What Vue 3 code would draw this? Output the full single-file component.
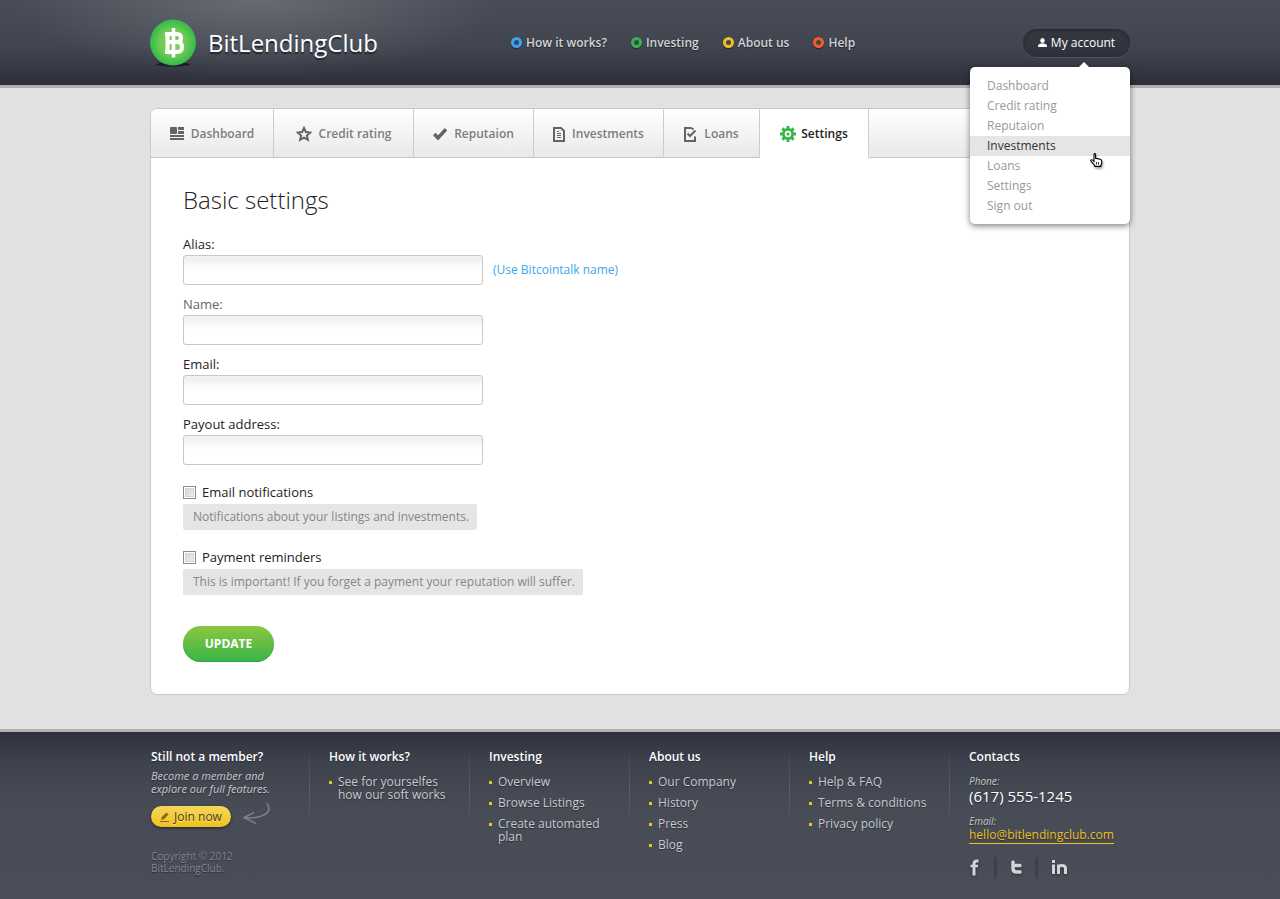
<script setup>
import { reactive, ref } from 'vue'

const nav = [
  { label: 'How it works?', tone: 'blue' },
  { label: 'Investing', tone: 'green' },
  { label: 'About us', tone: 'yellow' },
  { label: 'Help', tone: 'red' },
]

const menu = ['Dashboard', 'Credit rating', 'Reputaion', 'Investments', 'Loans', 'Settings', 'Sign out']
const hovered = ref('Investments')

const tabs = [
  { label: 'Dashboard', icon: 'dashboard' },
  { label: 'Credit rating', icon: 'star' },
  { label: 'Reputaion', icon: 'check' },
  { label: 'Investments', icon: 'document' },
  { label: 'Loans', icon: 'form' },
  { label: 'Settings', icon: 'gear' },
]
const activeTab = ref('Settings')

const form = reactive({ alias: '', name: '', email: '', payout: '', notifications: false, reminders: false })

const fields = [
  { key: 'alias', label: 'Alias:', hint: '(Use Bitcointalk name)' },
  { key: 'name', label: 'Name:', muted: true },
  { key: 'email', label: 'Email:' },
  { key: 'payout', label: 'Payout address:' },
]

const options = [
  { key: 'notifications', label: 'Email notifications', note: 'Notifications about your listings and investments.' },
  { key: 'reminders', label: 'Payment reminders', note: 'This is important! If you forget a payment your reputation will suffer.' },
]

const columns = [
  { title: 'How it works?', links: ['See for yourselfes how our soft works'] },
  { title: 'Investing', links: ['Overview', 'Browse Listings', 'Create automated plan'] },
  { title: 'About us', links: ['Our Company', 'History', 'Press', 'Blog'] },
  { title: 'Help', links: ['Help & FAQ', 'Terms & conditions', 'Privacy policy'] },
]

const teeth = [0, 45, 90, 135, 180, 225, 270, 315]
</script>

<template>
  <div class="page">
    <header class="header">
      <div class="wrap header-row">
        <a href="#" class="logo">
          <svg class="logo-mark" width="46" height="48" viewBox="0 0 46 48" aria-hidden="true">
            <defs>
              <radialGradient id="coin" cx="50%" cy="50%" r="52%">
                <stop offset="0" stop-color="#8fd35a" />
                <stop offset="0.55" stop-color="#6ccb52" />
                <stop offset="1" stop-color="#2fb84b" />
              </radialGradient>
            </defs>
            <ellipse cx="23" cy="45.500" rx="17" ry="2" fill="#1d202a" />
            <circle cx="23" cy="23.500" r="23" fill="url(#coin)" />
            <g fill="none" stroke="#fff" stroke-linejoin="round">
              <path d="M15 15h12q4 0 4 4t-4 4H16M27 23q5 0 5 5t-5 5H15" stroke-width="4" />
              <path d="M17.500 13v22" stroke-width="4" />
              <path d="M23.500 9v29.500" stroke-width="3.500" />
            </g>
          </svg>
          <span>BitLendingClub</span>
        </a>
        <nav class="nav">
          <a v-for="item in nav" :key="item.label" href="#" :class="item.tone">
            <i class="ring"></i>{{ item.label }}
          </a>
        </nav>
        <div class="account">
          <button type="button" class="account-button">
            <svg width="9" height="9" viewBox="0 0 9 9" fill="#fff" aria-hidden="true">
              <ellipse cx="4.500" cy="2.500" rx="2.200" ry="2.500" />
              <path d="M0 9V7.500Q0 6 3 5.500h3Q9 6 9 7.500V9z" />
            </svg>
            My account
          </button>
          <div class="dropdown">
            <a
              v-for="item in menu"
              :key="item"
              href="#"
              :class="{ on: hovered === item }"
              @mouseenter="hovered = item"
            >{{ item }}</a>
            <svg class="pointer" width="13" height="15" viewBox="0 0 13 15" aria-hidden="true">
              <path
                d="M4 1.500Q4 .6 4.800.6T5.600 1.500V5.200L7.500 5.600 9.300 6 11 6.700Q11.900 7.200 11.700 8.500V10.500L10.700 12.500V13.400H4.800V12.400L2.800 10 .7 7.800Q.6 6.700 1.600 6.700T4 8.300z"
                fill="#fff" stroke="#000" stroke-width="1.100"
              />
              <path d="M6.500 9v2.500M8.500 9v2.500" stroke="#000" stroke-width="0.800" />
            </svg>
          </div>
        </div>
      </div>
    </header>

    <main class="wrap main">
      <section class="panel">
        <nav class="tabs">
          <a
            v-for="tab in tabs"
            :key="tab.label"
            href="#"
            :class="{ active: tab.label === activeTab }"
            @click.prevent="activeTab = tab.label"
          >
            <svg v-if="tab.icon === 'dashboard'" width="14" height="14" viewBox="0 0 14 14" fill="currentColor">
              <rect width="7" height="7" rx="1" /><rect x="8" width="6" height="3" /><rect x="8" y="4" width="6" height="3" />
              <rect y="8" width="14" height="2" /><rect y="11" width="14" height="2" />
            </svg>
            <svg v-else-if="tab.icon === 'star'" width="16" height="16" viewBox="0 0 16 16" fill="none" stroke="currentColor" stroke-width="2">
              <path d="M8 2l1.800 4 4.400.5-3.300 3 1 4.300L8 11.600l-3.900 2.200 1-4.300-3.300-3L6.200 6z" />
            </svg>
            <svg v-else-if="tab.icon === 'check'" width="14" height="14" viewBox="0 0 14 14" fill="none" stroke="currentColor" stroke-width="3.500">
              <path d="M1.300 7l3.700 4L13 2.300" />
            </svg>
            <svg v-else-if="tab.icon === 'document'" width="12" height="15" viewBox="0 0 12 15" fill="none" stroke="currentColor">
              <path d="M1 1h7l3 3v10H1z" stroke-width="2" />
              <path d="M4 4.500h2M4 6.500h4M4 8.500h4M4 10.500h4" />
            </svg>
            <svg v-else-if="tab.icon === 'form'" width="13" height="15" viewBox="0 0 13 15" fill="none" stroke="currentColor" stroke-width="2">
              <path d="M7.500 1H1v13h10V9.500M7.500 1l2 1.500" />
              <path d="M3.500 6.500L6 9l5.500-5.500" />
            </svg>
            <svg v-else width="16" height="16" viewBox="0 0 16 16" fill="none" stroke="#39b54a">
              <circle cx="8" cy="8" r="4.600" stroke-width="2.800" />
              <circle cx="8" cy="8" r="1.600" fill="#39b54a" stroke="none" />
              <path v-for="a in teeth" :key="a" d="M8 0v3" stroke-width="3" :transform="`rotate(${a} 8 8)`" />
            </svg>
            {{ tab.label }}
          </a>
          <span class="tabs-rest"></span>
        </nav>

        <form class="settings" @submit.prevent>
          <h1>Basic settings</h1>
          <div v-for="field in fields" :key="field.key" class="field">
            <label :for="field.key" :class="{ muted: field.muted }">{{ field.label }}</label>
            <div class="field-row">
              <input :id="field.key" v-model="form[field.key]" type="text" />
              <a v-if="field.hint" href="#">{{ field.hint }}</a>
            </div>
          </div>
          <div v-for="option in options" :key="option.key" class="option">
            <label><input v-model="form[option.key]" type="checkbox" />{{ option.label }}</label>
            <p>{{ option.note }}</p>
          </div>
          <button type="submit" class="update">UPDATE</button>
        </form>
      </section>
    </main>

    <footer class="footer">
      <div class="wrap footer-grid">
        <section class="join">
          <h2>Still not a member?</h2>
          <p class="pitch">Become a member and explore our full features.</p>
          <div class="join-row">
            <button type="button" class="join-button">
              <svg width="10" height="10" viewBox="0 0 10 10" aria-hidden="true">
                <path d="M1 8l.8-3L6.500.5l2 2L4 7.200z" fill="#8a6a14" />
                <path d="M0 9.500h9" stroke="#8a6a14" />
              </svg>
              Join now
            </button>
            <svg width="28" height="22" viewBox="0 0 28 22" fill="none" stroke="#7c8089" stroke-width="1.500" aria-hidden="true">
              <path d="M25 0q5 8-3 12T2 14.500M12 9.500L2 14.500l12 6" />
            </svg>
          </div>
          <p class="copyright">Copyright © 2012<br />BitLendingClub.</p>
        </section>

        <section v-for="column in columns" :key="column.title">
          <h2>{{ column.title }}</h2>
          <ul>
            <li v-for="link in column.links" :key="link"><a href="#">{{ link }}</a></li>
          </ul>
        </section>

        <section class="contacts">
          <h2>Contacts</h2>
          <p class="caption">Phone:</p>
          <p class="phone">(617) 555-1245</p>
          <p class="caption">Email:</p>
          <a class="mail" href="mailto:hello@bitlendingclub.com">hello@bitlendingclub.com</a>
          <div class="social">
            <a href="#" aria-label="Facebook">
              <svg width="10" height="17" viewBox="0 0 10 17" fill="none" stroke="#d3d4d7">
                <path d="M5 16.500V5Q5 2 7.500 2H9.500" stroke-width="3" />
                <path d="M1.500 7h7.500" stroke-width="2.500" />
              </svg>
            </a>
            <a href="#" aria-label="Twitter">
              <svg width="11" height="14" viewBox="0 0 11 14" fill="none" stroke="#d3d4d7" stroke-width="3.500" stroke-linecap="round">
                <path d="M2 2v6.500q0 3.500 3.500 3.500H9M2 5.500h7" />
              </svg>
            </a>
            <a href="#" aria-label="LinkedIn">
              <svg width="15" height="14" viewBox="0 0 15 14" fill="none" stroke="#d3d4d7" stroke-width="3">
                <path d="M1.500 0v3M1.500 4.500V14M6.500 4.500V14M6.500 8q0-2.500 3.500-2.500T13.500 8.500V14" />
              </svg>
            </a>
          </div>
        </section>
      </div>
    </footer>
  </div>
</template>

<style>
body {
  margin: 0;
}
</style>

<style scoped>
* {
  box-sizing: border-box;
}
.page {
  --weave: rgba(255, 255, 255, 0.2);
  display: flex;
  flex-direction: column;
  min-height: 100vh;
  background:
    linear-gradient(135deg, var(--weave) 12.5%, transparent 12.5% 50%, var(--weave) 50% 62.5%, transparent 62.5%) 0 0 / 4px 4px,
    #e0e0e0;
  font: 12px/18px "Open Sans", "Noto Sans", sans-serif;
  color: #333;
}
a {
  color: inherit;
  text-decoration: none;
}
h1,
h2,
p,
ul {
  margin: 0;
  padding: 0;
}
button {
  border: 0;
  font: inherit;
  cursor: pointer;
}
.wrap {
  width: 100%;
  max-width: 980px;
  margin: 0 auto;
}

.header {
  --weave: rgba(255, 255, 255, 0.045);
  border-bottom: 3px solid #b1afb1;
  background:
    linear-gradient(135deg, var(--weave) 12.5%, transparent 12.5% 50%, var(--weave) 50% 62.5%, transparent 62.5%) 0 0 / 4px 4px,
    radial-gradient(ellipse 240px 80px at 20% 0, rgba(255, 255, 255, 0.17), transparent),
    linear-gradient(#474b55, #3f434d 55%, #2a2d39);
}
.header-row {
  display: flex;
  align-items: center;
  height: 85px;
}
.logo {
  display: flex;
  align-items: center;
  gap: 12px;
  flex: 0 0 361px;
  color: #fff;
  font-size: 24px;
  line-height: 32px;
  text-shadow: 0 2px 1px #22252e;
}
.nav {
  display: flex;
  gap: 24px;
  color: #d2d3d5;
  font-weight: 600;
  text-shadow: 0 1px 1px #22252e;
}
.nav a {
  display: flex;
  align-items: center;
  gap: 4px;
}
.ring {
  width: 11px;
  height: 11px;
  border: 3px solid;
  border-radius: 50%;
  box-shadow: 0 1px 1px #22252e;
}
.blue .ring { border-color: #3aa4f0; }
.green .ring { border-color: #35b34a; }
.yellow .ring { border-color: #eec020; }
.red .ring { border-color: #f75a28; }

.account {
  position: relative;
  margin-left: auto;
}
.account-button {
  display: flex;
  align-items: center;
  justify-content: center;
  gap: 4px;
  width: 107px;
  height: 28px;
  padding: 0;
  border-radius: 14px;
  background: rgba(30, 33, 43, 0.45);
  box-shadow: inset 0 1px 3px rgba(20, 22, 30, 0.5), 0 1px 0 rgba(255, 255, 255, 0.1);
  color: #fff;
}
.dropdown {
  position: absolute;
  z-index: 2;
  top: 38px;
  right: 0;
  width: 160px;
  padding: 9px 0 8px;
  border-radius: 5px;
  background: #fff;
  box-shadow: 0 2px 6px rgba(0, 0, 0, 0.5);
  color: #999;
}
.dropdown::before {
  content: "";
  position: absolute;
  top: -5px;
  right: 41px;
  border: 5px solid transparent;
  border-top: 0;
  border-bottom-color: #fff;
}
.dropdown a {
  display: block;
  padding-left: 17px;
  line-height: 20px;
}
.dropdown .on {
  background: #e5e5e5;
  color: #333;
}
.pointer {
  position: absolute;
  top: 86px;
  right: 27px;
  filter: drop-shadow(1px 2px 1px rgba(0, 0, 0, 0.35));
}

.main {
  flex: 1;
  padding: 20px 0 34px;
}
.panel {
  overflow: hidden;
  border: 1px solid #c8c8c8;
  border-radius: 7px;
  background: #fff;
}
.tabs {
  display: grid;
  grid-template-columns: 123px 140px 120px 130px 96px 109px 1fr;
  height: 49px;
  color: #7d7d7d;
  font-weight: 600;
}
.tabs a,
.tabs-rest {
  display: flex;
  align-items: center;
  justify-content: center;
  gap: 7px;
  padding-top: 2px;
  border-right: 1px solid #ccc;
  border-bottom: 1px solid #c8c8c8;
  background: linear-gradient(#fff, #e9e9e9);
}
.tabs .tabs-rest {
  border-right: 0;
}
.tabs svg {
  color: #636363;
}
.tabs .active {
  gap: 5px;
  border-bottom-color: #fff;
  background: #fff;
  color: #222;
}

.settings {
  padding: 27px 32px 32px;
}
h1 {
  margin-bottom: 20px;
  font-size: 24px;
  font-weight: 300;
  line-height: 30px;
  color: #222;
}
.field {
  margin-bottom: 10px;
}
.field label {
  display: block;
  margin-bottom: 2px;
  color: #222;
  font-size: 13px;
}
.field .muted {
  color: #666;
}
.field-row {
  display: flex;
  align-items: center;
  gap: 10px;
  color: #3ba5ee;
}
.field input {
  width: 300px;
  height: 30px;
  padding: 0 8px;
  border: 1px solid #c8c8c8;
  border-radius: 3px;
  background: linear-gradient(#ececec, #fff 45%);
  box-shadow: inset 0 1px 0 #f5f5f5;
  font: inherit;
}
.option {
  margin-top: 18px;
}
.option label {
  display: flex;
  align-items: center;
  gap: 6px;
  color: #222;
  font-size: 13px;
}
.option input {
  appearance: none;
  width: 13px;
  height: 13px;
  margin: 0;
  border: 1px solid #8b8b8b;
  background: linear-gradient(135deg, #cfd1d8, #f4f4f4);
  box-shadow: inset 0 0 0 1px #fff, inset 0 0 0 2px #d6d6d6;
}
.option input:checked {
  background: #39b54a;
}
.option p {
  width: fit-content;
  margin-top: 3px;
  padding: 4px 8px 4px 10px;
  border-radius: 2px;
  background: #e5e5e5;
  color: #858585;
}
.update {
  width: 91px;
  height: 36px;
  margin-top: 31px;
  padding: 0;
  border-radius: 18px;
  background: linear-gradient(#8cc63f, #39b54a);
  box-shadow: inset 0 -1px 1px #2fa344;
  color: #fff;
  font-weight: 700;
}

.footer {
  --weave: rgba(255, 255, 255, 0.03);
  border-top: 3px solid #b1b1b1;
  background:
    linear-gradient(135deg, var(--weave) 12.5%, transparent 12.5% 50%, var(--weave) 50% 62.5%, transparent 62.5%) 0 0 / 4px 4px,
    linear-gradient(#2d303c, #3d414c 30px, #464a55 75px, #484c57);
  color: #c9cacd;
  text-shadow: 0 1px 1px #2a2d36;
}
.footer-grid {
  display: grid;
  grid-template-columns: 159px repeat(4, 160px) 1fr;
  padding: 16px 0 22px;
}
.footer-grid > section {
  padding-left: 20px;
  background: linear-gradient(transparent, #5b5f69 50%, transparent) 0 0 / 1px 84px no-repeat;
}
.footer-grid > .join {
  padding-left: 1px;
  background: none;
}
h2 {
  color: #fff;
  font-size: 12px;
  font-weight: 600;
  line-height: 18px;
}
ul {
  display: grid;
  gap: 8px;
  margin-top: 9px;
  padding-right: 20px;
  list-style: none;
}
li {
  display: flex;
  gap: 6px;
  line-height: 13px;
}
li::before {
  content: "";
  flex: none;
  width: 3px;
  height: 3px;
  margin-top: 6px;
  background: #eec020;
}
.pitch {
  margin-top: 3px;
  padding-right: 24px;
  font-size: 11px;
  font-style: italic;
  line-height: 13px;
}
.join-row {
  display: flex;
  gap: 11px;
  margin-top: 8px;
}
.join-button {
  display: flex;
  align-items: center;
  justify-content: center;
  gap: 4px;
  width: 80px;
  height: 21px;
  margin-top: 3px;
  padding: 0;
  border-radius: 11px;
  background: linear-gradient(#f7d65c, #efc11f);
  box-shadow: 0 1px 3px #22252e;
  color: #4a3c10;
  text-shadow: 0 1px 0 #fbe48c;
}
.copyright {
  margin-top: 23px;
  color: #858892;
  font-size: 10px;
  line-height: 12px;
}
.caption {
  margin-top: 9px;
  font-size: 10px;
  font-style: italic;
  line-height: 12px;
}
.phone {
  color: #fff;
  font-size: 15px;
  line-height: 19px;
}
.mail {
  display: block;
  width: fit-content;
  border-bottom: 1px solid #eec020;
  color: #eec020;
  line-height: 16px;
}
.social {
  display: flex;
  height: 20px;
  margin-top: 13px;
}
.social a {
  display: flex;
  align-items: center;
  justify-content: center;
  width: 41px;
  filter: drop-shadow(0 1px 1px #2a2d36);
}
.social a:first-child {
  justify-content: flex-start;
  width: 26px;
}
.social a:last-child {
  width: 45px;
}
.social a + a {
  border-left: 1px solid #3b3e49;
}
</style>
